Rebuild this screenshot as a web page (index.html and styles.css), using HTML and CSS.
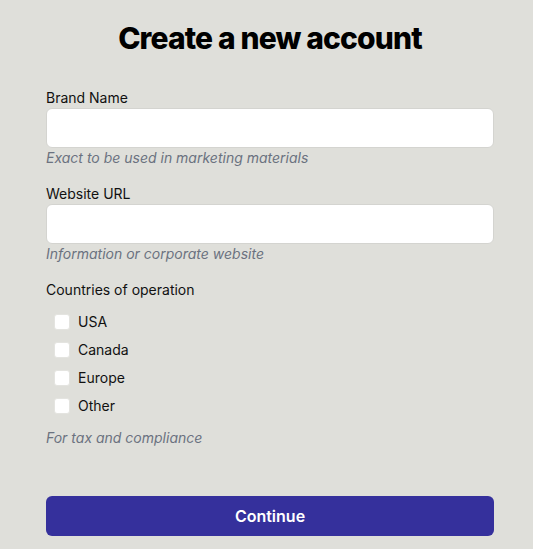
FILE: index.html
```html
<!DOCTYPE html>
<html lang="en">
<head>
  <meta charset="UTF-8" />
  <meta name="viewport" content="width=device-width, initial-scale=1.0" />
  <title>Create a new account</title>
  <link rel="stylesheet" href="styles.css">
</head>
<body>
  <main class="signup">
    <h1>Create a new account</h1>

    <form class="signup-form">
      <div class="field">
        <label for="brand">Brand Name</label>
        <input type="text" id="brand">
        <p class="hint">Exact to be used in marketing materials</p>
      </div>

      <div class="field">
        <label for="website">Website URL</label>
        <input type="text" id="website">
        <p class="hint">Information or corporate website</p>
      </div>

      <div class="field">
        <span class="field-label">Countries of operation</span>
        <ul class="checks">
          <li><label><span class="box"></span>USA</label></li>
          <li><label><span class="box"></span>Canada</label></li>
          <li><label><span class="box"></span>Europe</label></li>
          <li><label><span class="box"></span>Other</label></li>
        </ul>
        <p class="hint">For tax and compliance</p>
      </div>

      <button type="button" class="continue-btn">Continue</button>
    </form>
  </main>
</body>
</html>
```

FILE: styles.css
```css
body {
  background-color: #dfdfda;
  font-family: 'Inter', 'Helvetica Neue', sans-serif;
  color: #111;
  margin: 0;
  padding: 0;
}

.signup {
  width: 448px;
  padding: 20px 0 0 46px;
}

.signup h1 {
  margin: 0;
  font-size: 30px;
  line-height: 36px;
  font-weight: 800;
  letter-spacing: -0.85px;
  text-align: center;
  color: #000;
}

.signup-form {
  margin-top: 32px;
  display: flex;
  flex-direction: column;
}

.field {
  display: flex;
  flex-direction: column;
  margin-bottom: 16px;
}

.field label,
.field-label {
  font-size: 14px;
  line-height: 20px;
  color: #111;
}

.field input {
  box-sizing: border-box;
  height: 40px;
  width: 100%;
  margin: 0;
  border: 1px solid #d4d4d0;
  border-radius: 6px;
  background: white;
  font: inherit;
}

.hint {
  margin: 0;
  font-size: 14px;
  line-height: 20px;
  font-style: italic;
  color: #6b7280;
}

.checks {
  list-style: none;
  margin: 8px 0 8px 0;
  padding: 0 0 0 8px;
}

.checks li label {
  display: flex;
  align-items: center;
  gap: 8px;
  height: 28px;
}

.box {
  width: 16px;
  height: 16px;
  background: white;
  border-radius: 3px;
  box-sizing: border-box;
  border: 1px solid #e4e4e0;
}

.continue-btn {
  margin-top: 32px;
  height: 40px;
  width: 100%;
  border: none;
  border-radius: 6px;
  background-color: #35309c;
  color: white;
  font-family: inherit;
  font-size: 16px;
  font-weight: 600;
  cursor: pointer;
}
```
